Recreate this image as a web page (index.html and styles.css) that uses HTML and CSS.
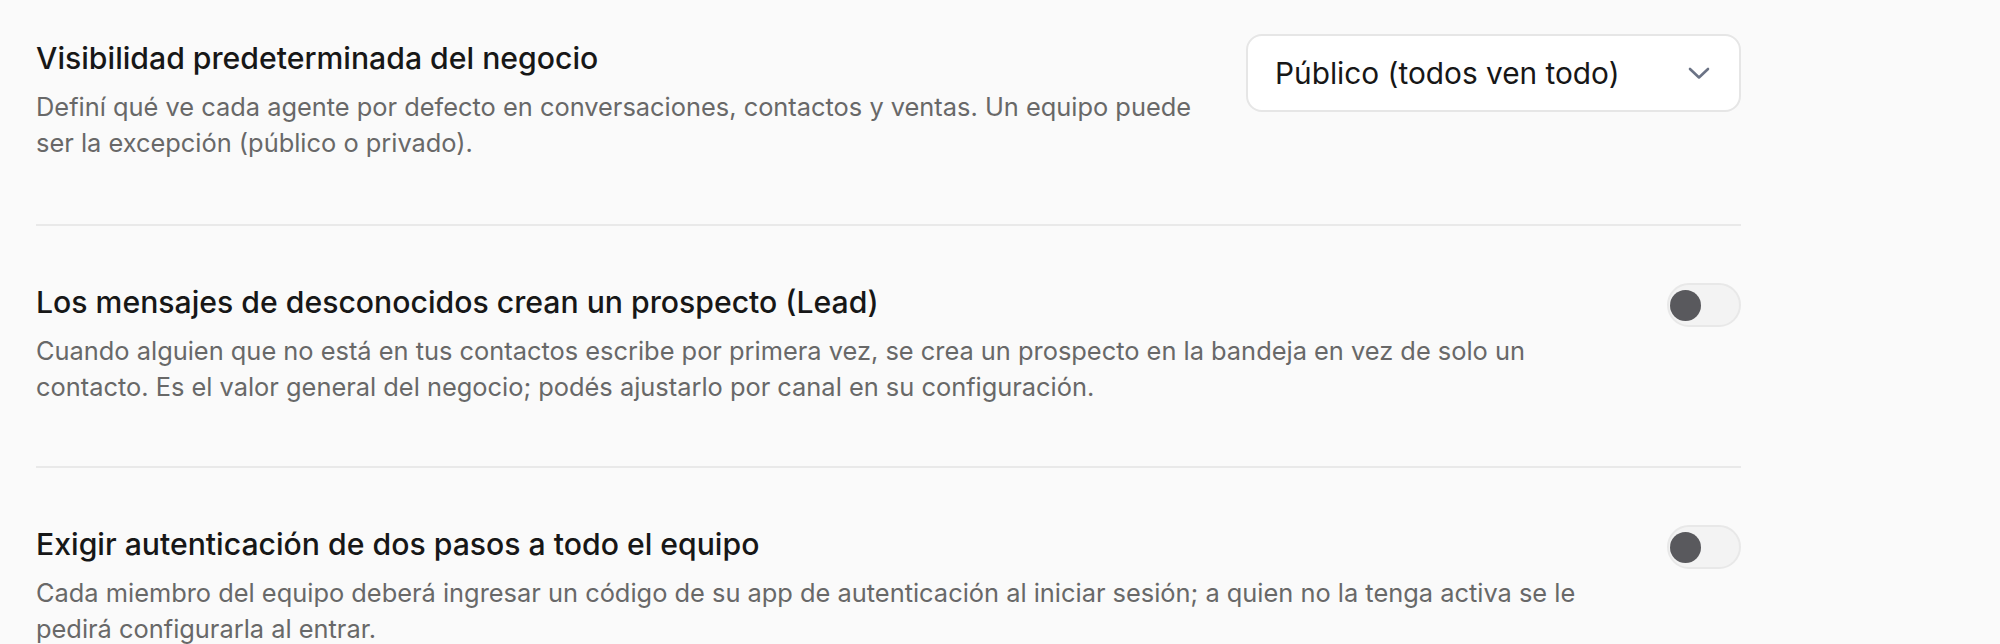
FILE: index.html
```html
<!DOCTYPE html>
<html lang="es">
<head>
<meta charset="utf-8">
<title>Configuración</title>
<link rel="stylesheet" href="styles.css">
</head>
<body>
<main class="settings">
  <section class="row row-first">
    <div class="text">
      <h3 class="title">Visibilidad predeterminada del negocio</h3>
      <p class="desc">Definí qué ve cada agente por defecto en conversaciones, contactos y ventas. Un equipo puede ser la excepción (público o privado).</p>
    </div>
    <div class="select">
      <span class="select-value">Público (todos ven todo)</span>
      <svg class="chevron" width="22" height="13" viewBox="0 0 22 13" aria-hidden="true"><path d="M2 2 L11 10.5 L20 2" fill="none" stroke="#6b7385" stroke-width="2.6" stroke-linecap="round" stroke-linejoin="round"/></svg>
    </div>
  </section>
  <section class="row">
    <div class="text">
      <h3 class="title">Los mensajes de desconocidos crean un prospecto (Lead)</h3>
      <p class="desc">Cuando alguien que no está en tus contactos escribe por primera vez, se crea un prospecto en la bandeja en vez de solo un contacto. Es el valor general del negocio; podés ajustarlo por canal en su configuración.</p>
    </div>
    <div class="toggle" role="switch" aria-checked="false"><span class="knob"></span></div>
  </section>
  <section class="row">
    <div class="text">
      <h3 class="title">Exigir autenticación de dos pasos a todo el equipo</h3>
      <p class="desc">Cada miembro del equipo deberá ingresar un código de su app de autenticación al iniciar sesión; a quien no la tenga activa se le pedirá configurarla al entrar.</p>
    </div>
    <div class="toggle" role="switch" aria-checked="false"><span class="knob"></span></div>
  </section>
</main>
</body>
</html>
```

FILE: styles.css
```css
html, body {
  margin: 0;
  padding: 0;
  background: #fafafa;
}

body {
  font-family: Inter, "Noto Sans", sans-serif;
  color: #171717;
}

.settings {
  width: 1705px;
  margin-left: 36px;
}

.row {
  display: flex;
  align-items: flex-start;
  justify-content: space-between;
  gap: 40px;
  padding: 56px 0 61px;
  border-bottom: 2px solid #e9e9e9;
}

.row-first {
  padding-top: 38px;
  padding-bottom: 63px;
}

.row:last-child {
  border-bottom: none;
}

.text {
  flex: 1;
  min-width: 0;
  max-width: 1575px;
}

.title {
  margin: 0;
  font-size: 30.2px;
  line-height: 40px;
  font-weight: 500;
  color: #171717;
}

.desc {
  margin: 11px 0 0;
  font-size: 25.4px;
  line-height: 36px;
  font-weight: 400;
  color: #686868;
}

.select {
  flex: none;
  width: 495px;
  height: 78px;
  margin-top: -4px;
  box-sizing: border-box;
  display: flex;
  align-items: center;
  justify-content: space-between;
  padding: 0 29px 0 27px;
  background: #ffffff;
  border: 2px solid #e6e6e6;
  border-radius: 16px;
  font-size: 29.8px;
  color: #171717;
}

.chevron {
  display: block;
}

.toggle {
  flex: none;
  width: 74px;
  height: 44px;
  margin-top: 1px;
  box-sizing: border-box;
  display: flex;
  align-items: center;
  padding-left: 1px;
  background: #f3f3f3;
  border: 2px solid #e8e8e8;
  border-radius: 22px;
}

.knob {
  width: 31px;
  height: 31px;
  border-radius: 50%;
  background: #59595d;
}
```
